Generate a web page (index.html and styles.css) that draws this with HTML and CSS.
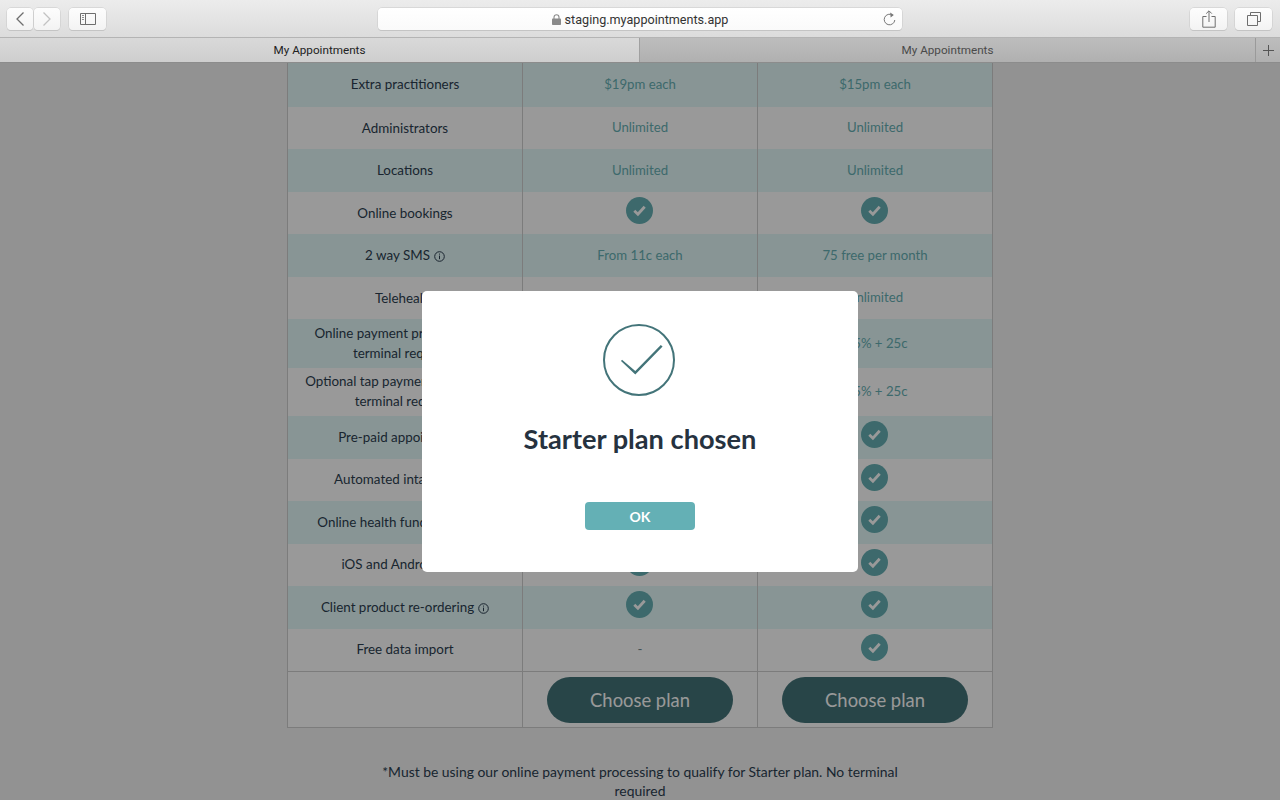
FILE: index.html
```html
<!DOCTYPE html>
<html lang="en">

<head>
    <meta charset="UTF-8">
    <title>My Appointments</title>
    <link rel="stylesheet" href="styles.css">
</head>

<body>
    <div class="toolbar">
        <div class="tool-group">
            <div class="nav-pair">
                <div class="tool-btn nav-btn">
                    <svg width="12" height="16" viewBox="0 0 12 16"><path d="M9.5 1.5 3 8l6.5 6.5" fill="none" stroke="#6e6e6e" stroke-width="1.3"/></svg>
                </div>
                <div class="tool-btn nav-btn">
                    <svg width="12" height="16" viewBox="0 0 12 16"><path d="M2.5 1.5 9 8l-6.5 6.5" fill="none" stroke="#c2c2c2" stroke-width="1.3"/></svg>
                </div>
            </div>
            <div class="tool-btn sidebar-btn">
                <svg width="16" height="12" viewBox="0 0 16 12"><path d="M.5.5h15v11H.5zM5.5.5v11" fill="none" stroke="#6e6e6e"/><path d="M2 2.5h2M2 4.5h2M2 6.5h2" stroke="#8e8e8e"/></svg>
            </div>
        </div>
        <div class="url-bar">
            <svg width="9" height="11" viewBox="0 0 9 11"><path d="M2 5V3.2a2.5 2.5 0 0 1 5 0V5" fill="none" stroke="#8a8a8a" stroke-width="1.1"/><rect y="4.6" width="9" height="6.4" rx=".8" fill="#8a8a8a"/></svg>
            <span class="url-text">staging.myappointments.app</span>
            <svg class="reload" width="13" height="14" viewBox="0 0 13 14"><path d="M9.6 3.2A5.3 5.3 0 1 0 11.8 8" fill="none" stroke="#777"/><path d="M7.2.6 10.8 3 7.6 5.4z" fill="#777"/></svg>
        </div>
        <div class="tool-group tool-group-right">
            <div class="tool-btn wide-btn">
                <svg width="14" height="18" viewBox="0 0 14 18"><path d="M4.5 6.5H.8v10.7h12.4V6.5H9.5M7 12V1M4.2 3.6 7 .8l2.8 2.8" fill="none" stroke="#6e6e6e"/></svg>
            </div>
            <div class="tool-btn wide-btn">
                <svg width="14" height="14" viewBox="0 0 14 14"><path d="M3.5 3.5V.5h10v9h-3M.5 3.5h10v10H.5z" fill="none" stroke="#6e6e6e"/></svg>
            </div>
        </div>
    </div>

    <div class="tabs">
        <div class="tab tab-active">My Appointments</div>
        <div class="tab tab-other">My Appointments</div>
        <div class="tab-add">
            <svg width="11" height="11" viewBox="0 0 11 11"><path d="M5.5 0v11M0 5.5h11" stroke="#555"/></svg>
        </div>
    </div>

    <div class="viewport">
        <div class="plan-table">
            <div class="row row-first stripe">
                <div class="cell label">Extra practitioners</div>
                <div class="cell value">$19pm each</div>
                <div class="cell value">$15pm each</div>
            </div>
            <div class="row">
                <div class="cell label">Administrators</div>
                <div class="cell value">Unlimited</div>
                <div class="cell value">Unlimited</div>
            </div>
            <div class="row stripe">
                <div class="cell label">Locations</div>
                <div class="cell value">Unlimited</div>
                <div class="cell value">Unlimited</div>
            </div>
            <div class="row">
                <div class="cell label">Online bookings</div>
                <div class="cell tick"><svg class="tick-icon" viewBox="0 0 27 27"><use href="#tick"/></svg></div>
                <div class="cell tick"><svg class="tick-icon" viewBox="0 0 27 27"><use href="#tick"/></svg></div>
            </div>
            <div class="row stripe">
                <div class="cell label">2 way SMS
                    <svg class="info" viewBox="0 0 11 11"><use href="#info"/></svg>
                </div>
                <div class="cell value">From 11c each</div>
                <div class="cell value">75 free per month</div>
            </div>
            <div class="row">
                <div class="cell label">Telehealth</div>
                <div class="cell value">Unlimited</div>
                <div class="cell value">Unlimited</div>
            </div>
            <div class="row row-tall stripe">
                <div class="cell label">Online payment processing (no<br>terminal required)</div>
                <div class="cell value">1.9% + 25c</div>
                <div class="cell value">1.5% + 25c</div>
            </div>
            <div class="row row-tall">
                <div class="cell label">Optional tap payments processing<br>terminal required</div>
                <div class="cell value">1.9% + 25c</div>
                <div class="cell value">1.5% + 25c</div>
            </div>
            <div class="row stripe">
                <div class="cell label">Pre-paid appointments</div>
                <div class="cell tick"><svg class="tick-icon" viewBox="0 0 27 27"><use href="#tick"/></svg></div>
                <div class="cell tick"><svg class="tick-icon" viewBox="0 0 27 27"><use href="#tick"/></svg></div>
            </div>
            <div class="row">
                <div class="cell label">Automated intake forms</div>
                <div class="cell tick"><svg class="tick-icon" viewBox="0 0 27 27"><use href="#tick"/></svg></div>
                <div class="cell tick"><svg class="tick-icon" viewBox="0 0 27 27"><use href="#tick"/></svg></div>
            </div>
            <div class="row stripe">
                <div class="cell label">Online health fund processing</div>
                <div class="cell tick"><svg class="tick-icon" viewBox="0 0 27 27"><use href="#tick"/></svg></div>
                <div class="cell tick"><svg class="tick-icon" viewBox="0 0 27 27"><use href="#tick"/></svg></div>
            </div>
            <div class="row">
                <div class="cell label">iOS and Android apps</div>
                <div class="cell tick"><svg class="tick-icon" viewBox="0 0 27 27"><use href="#tick"/></svg></div>
                <div class="cell tick"><svg class="tick-icon" viewBox="0 0 27 27"><use href="#tick"/></svg></div>
            </div>
            <div class="row stripe">
                <div class="cell label">Client product re-ordering
                    <svg class="info" viewBox="0 0 11 11"><use href="#info"/></svg>
                </div>
                <div class="cell tick"><svg class="tick-icon" viewBox="0 0 27 27"><use href="#tick"/></svg></div>
                <div class="cell tick"><svg class="tick-icon" viewBox="0 0 27 27"><use href="#tick"/></svg></div>
            </div>
            <div class="row">
                <div class="cell label">Free data import</div>
                <div class="cell value value-dash">-</div>
                <div class="cell tick"><svg class="tick-icon" viewBox="0 0 27 27"><use href="#tick"/></svg></div>
            </div>
            <div class="row row-choose">
                <div class="cell"></div>
                <div class="cell"><button class="choose-btn">Choose plan</button></div>
                <div class="cell"><button class="choose-btn">Choose plan</button></div>
            </div>
        </div>

        <p class="footnote">*Must be using our online payment processing to qualify for Starter plan. No terminal required</p>

        <div class="backdrop">
            <div class="modal">
                <svg class="modal-icon" width="72" height="72" viewBox="0 0 72 72">
                    <circle cx="36" cy="36" r="35" fill="none" stroke="#437479" stroke-width="2"/>
                    <path d="M18 37l14.3 13.6L59.6 22.6l-1.8-1.7-25.5 26L19 35.8z" fill="#437479"/>
                </svg>
                <h2 class="modal-title">Starter plan chosen</h2>
                <button class="ok-btn">OK</button>
            </div>
        </div>
    </div>

    <!-- shared icons -->
    <svg class="icon-defs" width="0" height="0">
        <symbol id="tick" viewBox="0 0 27 27">
            <circle cx="13.5" cy="13.5" r="13.5" fill="#66b0b4"/>
            <path d="M8.3 13.8l3.6 3.5 6.8-7.6" fill="none" stroke="#fff" stroke-width="2.8"/>
        </symbol>
        <symbol id="info" viewBox="0 0 11 11">
            <circle cx="5.5" cy="5.5" r="4.8" fill="none" stroke="#2c3e50"/>
            <path d="M5.5 4.6v3.6M5.5 2.6v1" stroke="#2c3e50"/>
        </symbol>
    </svg>
</body>

</html>
```

FILE: styles.css
```css
* {
    box-sizing: border-box;
}

html,
body {
    margin: 0;
    height: 100%;
    overflow: hidden;
}

body {
    font-family: Lato, "Open Sans", sans-serif;
    background: #f3f3f3;
    color: #2c3e50;
}

/* browser chrome */
.toolbar {
    height: 38px;
    display: grid;
    grid-template-columns: 1fr 524px 1fr;
    align-items: start;
    padding: 8px 8px 0;
    background: linear-gradient(#ececec, #dcdcdc);
    border-bottom: 1px solid #b4b4b4;
}

.tool-group {
    display: flex;
    gap: 9px;
    margin-left: -1px;
}

.tool-group-right {
    justify-content: flex-end;
    gap: 8px;
    margin-left: 0;
}

.nav-pair {
    display: flex;
    gap: 1px;
}

.tool-btn {
    height: 22px;
    display: flex;
    align-items: center;
    justify-content: center;
    background: linear-gradient(#fdfdfd, #f3f3f3);
    border-radius: 4px;
    box-shadow: 0 0 0 .5px #c8c8c8, 0 1px 0 #c0c0c0;
}

.nav-btn {
    width: 26px;
}

.sidebar-btn {
    width: 37px;
}

.wide-btn {
    width: 37px;
}

.url-bar {
    position: relative;
    height: 22px;
    display: flex;
    align-items: center;
    justify-content: center;
    gap: 4px;
    background: linear-gradient(#ffffff, #fafafa);
    border-radius: 4px;
    box-shadow: 0 0 0 .5px #c8c8c8, 0 1px 0 #c0c0c0;
}

.url-text {
    font-family: Roboto, "Liberation Sans", sans-serif;
    font-size: 12.6px;
    color: #333;
}

.reload {
    position: absolute;
    right: 6px;
    top: 4px;
}

.tabs {
    height: 25px;
    display: flex;
    font-family: Roboto, "Liberation Sans", sans-serif;
    font-size: 11.7px;
    border-bottom: 1px solid #8c8c8c;
}

.tab {
    display: flex;
    align-items: center;
    justify-content: center;
}

.tab-active {
    width: 640px;
    background: linear-gradient(#d9d9d9, #cecece);
    color: #222;
    border-right: 1px solid #a0a0a0;
}

.tab-other {
    flex: 1;
    background: linear-gradient(#bdbdbd, #b0b0b0);
    color: #4a4a4a;
}

.tab-add {
    width: 25px;
    display: flex;
    align-items: center;
    justify-content: center;
    background: linear-gradient(#bdbdbd, #b0b0b0);
    border-left: 1px solid #9a9a9a;
}

/* page */
.viewport {
    position: relative;
    height: 737px;
    overflow: hidden;
}

.plan-table {
    width: 706px;
    margin: 0 auto;
    background: white;
    border-right: 1px solid #cfcfcf;
    border-bottom: 1px solid #cfcfcf;
}

.row {
    height: 42.5px;
    display: grid;
    grid-template-columns: repeat(3, 1fr);
}

.row-first {
    height: 43.9px;
}

.row-tall {
    height: 48.4px;
}

.row-choose {
    height: 56px;
    border-top: 1px solid #cfcfcf;
}

.stripe {
    background: #e3f8f8;
}

.cell {
    display: flex;
    align-items: center;
    justify-content: center;
    gap: 4px;
    text-align: center;
    font-size: 13.4px;
    line-height: 20px;
    border-left: 1px solid #cfcfcf;
}

.label {
    color: #2c3e50;
    padding-bottom: 1px;
}

.value {
    color: #66b0b4;
    font-size: 13.2px;
    padding-bottom: 2px;
}

.value-dash {
    color: #6f8a90;
}

.tick {
    align-items: flex-start;
    padding-top: 5px;
}

.tick-icon {
    width: 27px;
    height: 27px;
    margin-right: 1px;
}

.info {
    width: 11px;
    height: 11px;
    margin-top: 3px;
}

.choose-btn {
    width: 186px;
    height: 46px;
    border: none;
    border-radius: 23px;
    background: #437479;
    color: white;
    font-family: inherit;
    font-size: 18.4px;
}

.footnote {
    width: 536px;
    margin: 34px auto 0;
    font-size: 13.9px;
    line-height: 19px;
    text-align: center;
}

.icon-defs {
    position: absolute;
}

/* dialog */
.backdrop {
    position: absolute;
    inset: 0;
    display: flex;
    align-items: center;
    justify-content: center;
    background: rgba(0, 0, 0, 0.4);
}

.modal {
    width: 436px;
    padding: 33px 0 42px;
    display: flex;
    flex-direction: column;
    align-items: center;
    background: white;
    border-radius: 5px;
}

.modal-icon {
    margin-right: 2px;
}

.modal-title {
    margin: 26px 0 46px;
    font-size: 27.2px;
    line-height: 34px;
    font-weight: 700;
    color: #26323f;
}

.ok-btn {
    width: 110px;
    height: 28px;
    border: none;
    border-radius: 4px;
    background: #64b0b5;
    color: white;
    font-family: inherit;
    font-size: 14px;
    font-weight: 700;
}
```
